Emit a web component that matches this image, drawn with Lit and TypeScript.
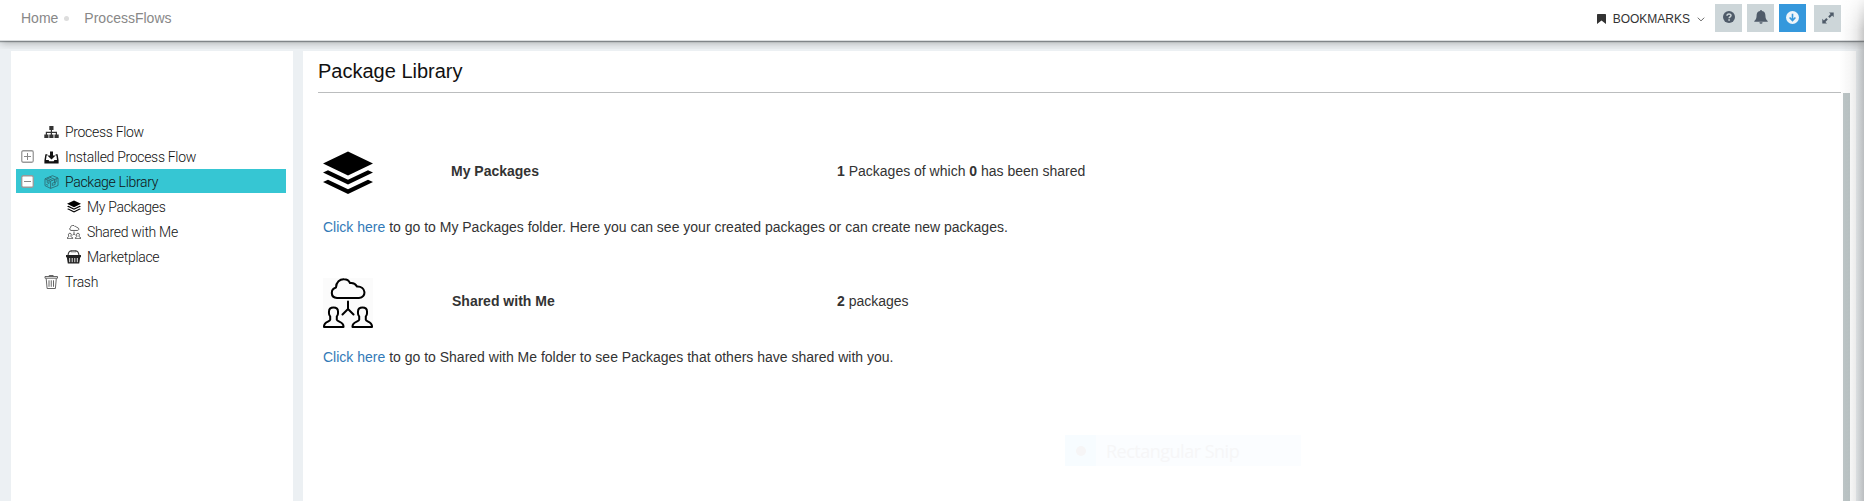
import { LitElement, html, css, svg } from "lit";
import { customElement } from "lit/decorators.js";
import { classMap } from "lit/directives/class-map.js";

const icons: Record<string, any> = {
  sitemap: svg`<svg viewBox="0 0 15 14" width="15" height="14"><path fill="#333" d="M5.3 1h4.2v4H8v1.700h5v2.800h1.700V13H10.500V9.500h1.300V8H8v1.500h1.500V13H5.300V9.500h1.500V8H3v1.500h1.500V13H.3V9.500h1.500V6.700h5V5H5.300z"/></svg>`,
  install: svg`<svg viewBox="0 0 15 14" width="15" height="14"><path fill="#111" d="M6 1.500h3v4h2.600L7.500 9.400 3.400 5.500H6z"/><path fill="#111" d="M.4 10.200 1.400 4.300h2v1.200h-.8l-.6 4.500h2.600l.7 1.300h4.400l.7-1.300H13l-.6-4.500h-.8V4.300h2l1 5.900v3.300H.4z"/></svg>`,
  box: svg`<svg viewBox="0 0 15 14" width="15" height="14" fill="none" stroke="#2d6e76" stroke-width=".9"><path d="M1 3.800 8.500.7 14 3v7.500L6.600 13.400 1 10.600zM1 3.800l5.600 2.400L14 3M6.600 6.200v7.200M3 3l5.600 2.400M5.300 2l5.600 2.400M3.200 5v2.700l1.800.8V5.700M10.500 4.700v3l1.600-.7V4M2.200 9.400l2 .9M8.300 10.500V8.200l2.800-1v2.300z"/></svg>`,
  layers: svg`<svg viewBox="0 0 50 44" width="14" height="13"><path d="M25 .5 50 12.500 25 24.500 0 12.500zM0 21.800l5-2.300 20 9.700 20-9.700 5 2.300L25 34zM0 31.200l5-2.300 20 9.700 20-9.700 5 2.300L25 43.400z"/></svg>`,
  shared: svg`<svg viewBox="0 0 50 50" width="14" height="14" fill="none" stroke="#444" stroke-width="3"><path d="M14 19.500a6 6 0 0 1-1-11C13 4 17 1 21 1.200c3 0 5.500 1.500 7 4 4-.7 6.500 1 7.500 4 8-.5 9 10.300 1.500 10.300zM25 23v8l-5 6m5-6 5 6M6 39c-2-5-1-9.500 4.200-9.500S16.500 34 14 39c0 3 0 4 6 6v4H1v-4c5-2 5.500-3 5-6zM35 39c-2-5-1-9.500 4.200-9.500S45.500 34 43 39c0 3 0 4 6 6v4H30v-4c5-2 5.500-3 5-6z"/></svg>`,
  basket: svg`<svg viewBox="0 0 15 14" width="15" height="14"><path fill="none" stroke="#333" stroke-width="1.100" d="M2 5.500Q2.500 1 5 1h5q2.500 0 3 4.500"/><path fill="#fff" stroke="#333" stroke-width=".7" d="M5 .4h5v1.400H5z"/><path fill="#222" d="M0 5h15v2.300h-.8l-1 6.200H1.800L.8 7.300H0z"/><path stroke="#fff" stroke-width=".9" d="M3.700 8v4.200M6.200 8v4.200M8.800 8v4.200M11.300 8v4.200"/></svg>`,
  trash: svg`<svg viewBox="0 0 15 14" width="15" height="14" fill="none" stroke="#555" stroke-width=".9"><path d="M1 1.500h12.500v1.700H1zM5.200 1.500V.5h4v1M2.200 3.500l.9 10h8.300l.9-10M5 5.300v6.500M7.250 5.300v6.500M9.500 5.300v6.500"/></svg>`,
  plus: svg`<svg viewBox="0 0 13 13" width="13" height="13"><rect x=".75" y=".75" width="11.500" height="11.500" rx="1.500" fill="#fff" stroke="#999" stroke-width="1.300"/><path d="M3 6.500h7M6.500 3v7" stroke="#888"/></svg>`,
  minus: svg`<svg viewBox="0 0 13 13" width="13" height="13"><rect x=".75" y=".75" width="11.500" height="11.500" rx="1.500" fill="#fff" stroke="#999" stroke-width="1.300"/><path d="M3 6.500h7" stroke="#888"/></svg>`,
  question: svg`<svg viewBox="0 0 12 12" width="12" height="12"><circle cx="6" cy="6" r="6" fill="#4f5b69"/><path d="M4 4.800C4 2.400 8 2.400 8 4.600 8 6 6.100 5.900 6.100 7.300" fill="none" stroke="#cdd6d9" stroke-width="1.500"/><path d="M5.300 8.200h1.600v1.500H5.300z" fill="#cdd6d9"/></svg>`,
  bell: svg`<svg viewBox="0 0 14 14" width="14" height="14"><path fill="#4f5b69" d="M6 1a1 1 0 0 1 2 0c2.500.5 3.400 2.200 3.400 4.500 0 2.700.7 4 2.300 5.500v.8H.3V11C1.900 9.500 2.600 8.200 2.600 5.500 2.600 3.200 3.500 1.500 6 1zM5.400 12.200h3.200a1.600 1.600 0 0 1-3.200 0z"/></svg>`,
  download: svg`<svg viewBox="0 0 13 13" width="13" height="13"><circle cx="6.500" cy="6.500" r="6.500" fill="#eef5fa"/><path d="M6.500 2.700v6.500M3.600 6.500l2.900 3 2.900-3" fill="none" stroke="#3598dc" stroke-width="1.600"/></svg>`,
  expand: svg`<svg viewBox="0 0 12 12" width="12" height="12"><path fill="#4f5b69" d="M7 .5h4.700v4.700L10.100 3.600 7.700 6 6.200 4.500l2.400-2.400zM.3 6.800 1.900 8.400 4.300 6 5.800 7.500 3.400 9.900 5 11.500H.3z"/></svg>`,
  bookmark: svg`<svg viewBox="0 0 9 10" width="9" height="10"><path fill="#333" d="M.7 0h7.600q.7 0 .7.700V10L4.500 6.500 0 10V.7Q0 0 .7 0z"/></svg>`,
  chevron: svg`<svg viewBox="0 0 8 5" width="8" height="5"><path d="M.8.700 4 3.900 7.200.700" fill="none" stroke="#666"/></svg>`,
};

const bigShared = svg`<svg viewBox="0 0 50 50" width="50" height="50" fill="none" stroke="#000" stroke-width="2" stroke-linejoin="round" stroke-linecap="round"><path stroke="none" fill="#fbfbfb" d="M0 0h50v50H0z"/><path d="M14 20C7 19.500 7.500 11 13 9.500 13 4 17 1 21 1.200c3 0 5 1.500 6 3.800 3-.5 5.500.8 7 3.400 9-.5 10 11 2 11.600zM25 23.500V31l-5.500 5.500M25 31l5.500 5.500M7.200 38.500C5.500 37 6 35.500 6 33.500c0-2.500 1.700-4 4.500-4s4.500 1.500 4.500 4c0 2 .5 3.500-1.200 5v3.200C14.500 44 21 43.500 20.500 49H1c-.5-5.500 5.700-5 6.200-7.300zM36.200 38.500C34.500 37 35 35.500 35 33.500c0-2.500 1.700-4 4.500-4s4.500 1.500 4.500 4c0 2 .5 3.500-1.200 5v3.200C43.300 44 49.500 43.500 49 49H29.500C29 43.500 35.700 44 36.200 41.700z"/></svg>`;
const bigLayers = svg`<svg viewBox="0 0 50 44" width="50" height="44"><path d="M25 .5 50 12.500 25 24.500 0 12.500zM0 21.600l5-2.300 20 9.500 20-9.500 5 2.300L25 33.500zM0 31l5-2.300 20 9.500 20-9.500 5 2.300L25 43z"/></svg>`;

@customElement("app-header")
class AppHeader extends LitElement {
  static styles = css`
    :host { display: flex; box-sizing: border-box; height: 41px; background: #fff; border-bottom: 1px solid #dadddf;
      box-shadow: 0 1px 9px rgba(0,0,0,.34), 0 1px 1px rgba(50,60,65,.42); clip-path: inset(0 0 -8px 0); position: relative;
      font: 14px/16px "Liberation Sans", Arial, sans-serif; color: #888; }
    .crumbs { display: flex; flex: 1; padding: 10px 0 0 21px; }
    .dot { width: 5px; height: 5px; border-radius: 50%; background: #ddd; margin: 6px 15px 0 6px; }
    .actions { display: flex; padding: 4px 23px 0 0; }
    .marks { display: flex; color: #333; font-size: 12px; padding-top: 7px; }
    .marks svg:first-child { margin: 3px 7px 0 0; }
    .marks svg:last-child { margin: 6px 10px 0 7px; }
    .btn { width: 27px; height: 28px; background: #cdd6d9; display: flex; align-items: center; justify-content: center; margin-right: 5px; }
    .btn svg { margin-bottom: 2px; }
    .blue { background: #3598dc; margin-right: 8px; }
    .last { height: 27px; margin: 1px 0 0; }
  `;
  render() {
    return html`<nav class="crumbs"><span>Home</span><i class="dot"></i><span>ProcessFlows</span></nav>
      <div class="actions">
        <div class="marks">${icons.bookmark}<span>BOOKMARKS</span>${icons.chevron}</div>
        <div class="btn">${icons.question}</div><div class="btn">${icons.bell}</div>
        <div class="btn blue">${icons.download}</div><div class="btn last">${icons.expand}</div>
      </div>`;
  }
}

interface TreeNode { label: string; icon: string; toggle?: string; child?: boolean; selected?: boolean; }
const nodes: TreeNode[] = [
  { label: "Process Flow", icon: "sitemap" },
  { label: "Installed Process Flow", icon: "install", toggle: "plus" },
  { label: "Package Library", icon: "box", toggle: "minus", selected: true },
  { label: "My Packages", icon: "layers", child: true },
  { label: "Shared with Me", icon: "shared", child: true },
  { label: "Marketplace", icon: "basket", child: true },
  { label: "Trash", icon: "trash" },
];

@customElement("folder-tree")
class FolderTree extends LitElement {
  static styles = css`
    :host { display: flex; flex-direction: column; gap: 1px; box-sizing: border-box; width: 282px; padding: 68px 7px 0 5px; background: #fff;
      font: 300 14px/24px Roboto, sans-serif; letter-spacing: -.31px; color: #111; }
    .row { display: flex; height: 24px; align-items: center; }
    .selected { background: #36c6d3; }
    .toggle { width: 28px; display: flex; }
    .toggle svg { margin-left: 5px; }
    .child .toggle { width: 50px; }
    .icon { width: 15px; display: flex; justify-content: center; margin: 1px 6px 0 0; }
    .label { padding-top: 1px; }
  `;
  render() {
    return nodes.map(n => html`<div class=${classMap({ row: true, child: !!n.child, selected: !!n.selected })}>
      <span class="toggle">${n.toggle ? icons[n.toggle] : ""}</span><span class="icon">${icons[n.icon]}</span><span class="label">${n.label}</span></div>`);
  }
}

@customElement("library-panel")
class LibraryPanel extends LitElement {
  static styles = css`
    :host { display: flex; flex-direction: column; box-sizing: border-box; width: 1553px; background: #fff; padding-left: 15px;
      font: 14px/20px "Liberation Sans", Arial, sans-serif; color: #333; position: relative; }
    h1 { margin: 0 15px 0 0; height: 41px; border-bottom: 1px solid #bbbdbe; font-weight: 400; font-size: 20px; line-height: 40px; color: #111; }
    .body { display: flex; flex: 1; justify-content: space-between; }
    .list { padding: 53px 0 0 5px; }
    .scroll { width: 7px; background: #bdc6c7; margin-right: 6px; }
    .row { display: grid; grid-template-columns: 128px 386px auto; height: 50px; align-items: center; }
    .row svg { display: block; margin-top: 4px; }
    p { margin: 21px 0 37px; height: 20px; }
    .second { height: 54px; }
    .second span:nth-of-type(1) { padding-left: 1px; }
    .second + p { margin-top: 19px; }
    a { color: #337ab7; }
    .snip { position: absolute; left: 762px; top: 384px; width: 236px; height: 31px; display: flex; background: #fbfdff; color: #f6f6f7;
      font: 18px/33px "Open Sans", "Noto Sans", sans-serif; letter-spacing: -.5px; }
    .mark { width: 31px; background: #f7fcff; display: flex; align-items: center; justify-content: center; margin-right: 10px; }
    .mark i { width: 10px; height: 10px; border-radius: 50%; background: #f6f5f6; }
    b { font-weight: 700; }
  `;
  render() {
    return html`<h1>Package Library</h1>
      <div class="body"><div class="list">
        <div class="row">${bigLayers}<span><b>My Packages</b></span><span><b>1</b> Packages of which <b>0</b> has been shared</span></div>
        <p><a>Click here</a> to go to My Packages folder. Here you can see your created packages or can create new packages.</p>
        <div class="row second">${bigShared}<span><b>Shared with Me</b></span><span><b>2</b> packages</span></div>
        <p><a>Click here</a> to go to Shared with Me folder to see Packages that others have shared with you.</p>
      </div><div class="scroll"></div></div>
      <div class="snip"><span class="mark"><i></i></span><span>Rectangular Snip</span></div>`;
  }
}

@customElement("app-root")
class AppRoot extends LitElement {
  static styles = css`
    :host { display: flex; flex-direction: column; position: relative; width: 1864px; height: 501px; background: #ecf0f3; overflow: hidden; }
    .main { display: flex; flex: 1; gap: 10px; padding: 10px 0 0 11px; }
    app-header { z-index: 1; }
    .edge { position: absolute; z-index: 2; right: 0; top: 0; width: 24px; height: 501px; pointer-events: none;
      background: linear-gradient(to right, rgba(60,60,60,0), rgba(60,60,60,.05) 45%, rgba(60,60,60,.11) 70%, rgba(60,60,60,.28));
      -webkit-mask-image: linear-gradient(to bottom, rgba(0,0,0,.2), #000 30px); mask-image: linear-gradient(to bottom, rgba(0,0,0,.2), #000 30px); }
  `;
  render() {
    return html`<app-header></app-header><div class="main"><folder-tree></folder-tree><library-panel></library-panel></div><div class="edge"></div>`;
  }
}
